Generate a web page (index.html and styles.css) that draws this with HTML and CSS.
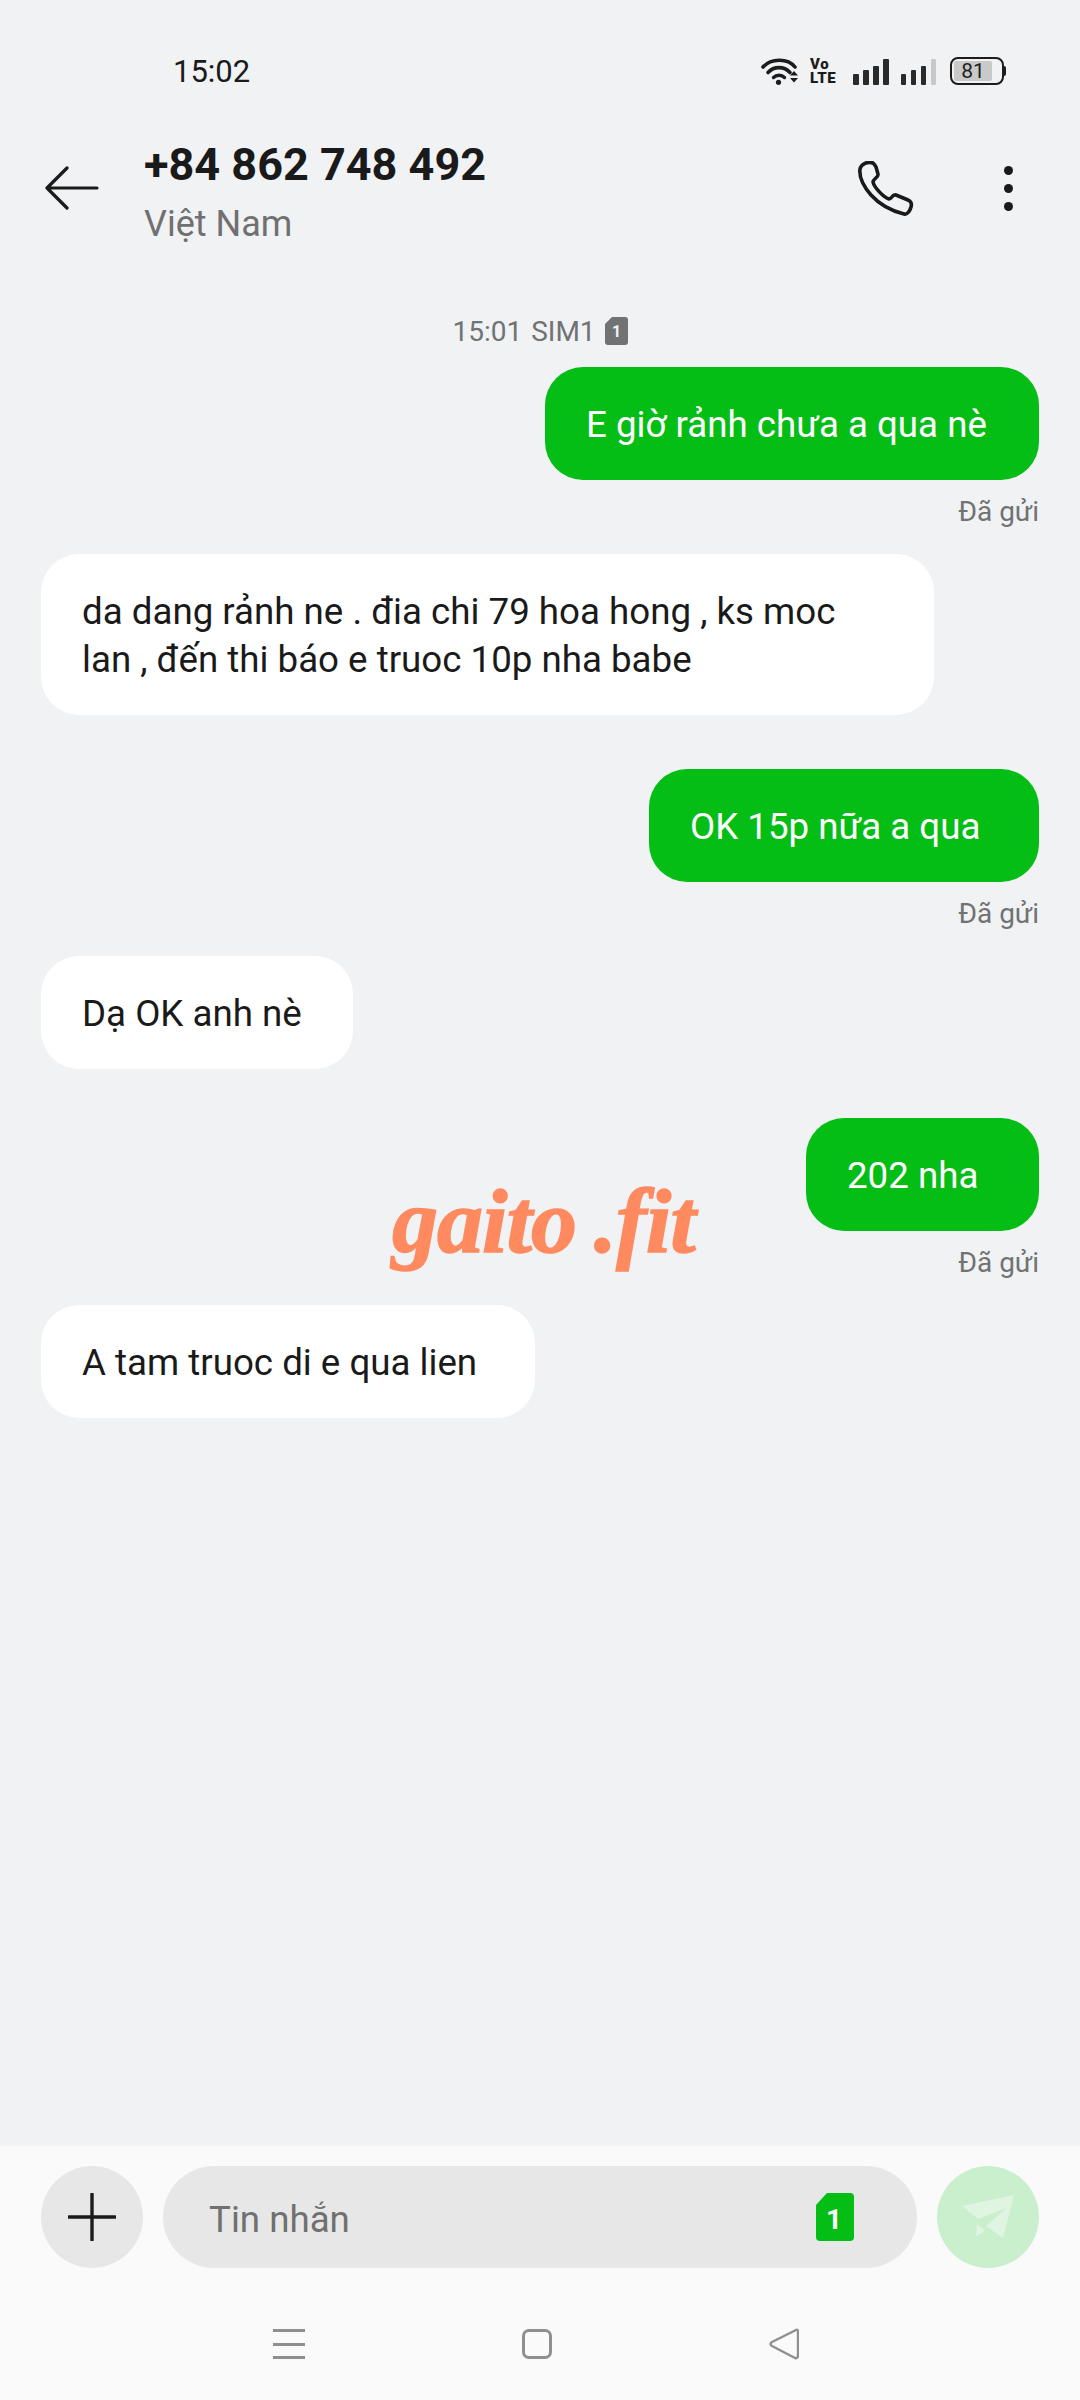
FILE: index.html
```html
<!DOCTYPE html>
<html lang="vi">
<head>
<meta charset="utf-8">
<title>+84 862 748 492</title>
<link rel="stylesheet" href="styles.css">
</head>
<body>
<div class="screen">
  <div class="status">
    <span class="clock">15:02</span>
    <div class="status-icons">
      <svg class="wifi" viewBox="0 0 38 28" width="38" height="28">
        <path d="M2 10 C10 1 27 1 34 10" fill="none" stroke="#1c1c1c" stroke-width="3.6" stroke-linecap="round"/>
        <path d="M7 15.5 C13 9 23 9 29 15.5" fill="none" stroke="#1c1c1c" stroke-width="3.6" stroke-linecap="round"/>
        <path d="M12.5 20.5 C15.5 17.5 20.5 17.5 23.5 20.5" fill="none" stroke="#1c1c1c" stroke-width="3.4" stroke-linecap="round"/>
        <circle cx="17.5" cy="25.3" r="2.6" fill="#1c1c1c"/>
        <path d="M29 18.5 L33 14 L37 18.5 Z M29 21 L37 21 L33 25.5 Z" fill="#1c1c1c"/>
      </svg>
      <div class="volte"><span>Vo</span><span>LTE</span></div>
      <div class="bars">
        <i class="bar b1"></i><i class="bar b2"></i><i class="bar b3"></i><i class="bar b4"></i>
      </div>
      <div class="bars">
        <i class="bar b1"></i><i class="bar b2"></i><i class="bar b3"></i><i class="bar b4 off"></i>
      </div>
      <div class="battery"><div class="battery-body"><span class="battery-fill">81</span></div><i class="battery-cap"></i></div>
    </div>
  </div>

  <header class="header">
    <svg class="back" viewBox="0 0 56 44" width="56" height="44">
      <path d="M52 22 H2 M22 2 L2 22 L22 42" fill="none" stroke="#1a1a1a" stroke-width="3.2" stroke-linecap="round" stroke-linejoin="round"/>
    </svg>
    <div class="title-block">
      <h1 class="title">+84 862 748 492</h1>
      <p class="subtitle">Việt Nam</p>
    </div>
    <svg class="phone" viewBox="0 0 56 56" width="56" height="56">
      <path d="M2 8 C3 3 10 0 15 2 C16 3 17 4 18 6 L20 13 C21 16 15 18 15 21 C16 26 25 36 31 38 C34 38 34 33 38 34 L50 39 C53 40 54 43 53 46 C52 50 49 54 46 53 C34 50 22 44 13 34 C6 26 1 16 2 8 Z" fill="none" stroke="#1a1a1a" stroke-width="3.6" stroke-linejoin="round"/>
    </svg>
    <div class="more"><i></i><i></i><i></i></div>
  </header>

  <main class="thread">
    <div class="stamp"><span>15:01</span><span>SIM1</span>
      <svg class="stamp-sim" viewBox="0 0 23 28" width="23" height="28">
        <path d="M7 0 H20 Q23 0 23 3 V25 Q23 28 20 28 H3 Q0 28 0 25 V7 Z" fill="#707274"/>
        <text x="11.5" y="20" text-anchor="middle" class="stamp-sim-num">1</text>
      </svg>
    </div>

    <div class="bubble sent w1">E giờ rảnh chưa a qua nè</div>
    <div class="meta">Đã gửi</div>

    <div class="bubble recv w2">da dang rảnh ne . đia chi 79 hoa hong , ks moc lan , đến thi báo e truoc 10p nha babe</div>

    <div class="bubble sent w3 after-recv">OK 15p nữa a qua</div>
    <div class="meta">Đã gửi</div>

    <div class="bubble recv w4">Dạ OK anh nè</div>

    <div class="bubble sent w5 after-recv-short">202 nha</div>
    <div class="meta">Đã gửi</div>

    <div class="bubble recv w6">A tam truoc di e qua lien</div>
  </main>

  <div class="watermark">gaito .fit</div>

  <footer class="dock">
    <div class="composer">
      <div class="round plus">
        <svg viewBox="0 0 48 48" width="48" height="48"><path d="M24 1 V47 M1 24 H47" stroke="#1a1a1a" stroke-width="3.4" stroke-linecap="round"/></svg>
      </div>
      <div class="input">
        <span class="placeholder">Tin nhắn</span>
        <svg class="input-sim" viewBox="0 0 38 48" width="38" height="48">
          <path d="M11 0 H34 Q38 0 38 4 V44 Q38 48 34 48 H4 Q0 48 0 44 V12 Z" fill="#04bd15"/>
          <text x="18" y="36" text-anchor="middle" class="input-sim-num">1</text>
        </svg>
      </div>
      <div class="round send">
        <svg viewBox="0 0 54 46" width="54" height="46">
          <path d="M1 12 L53 1 L42 44 L25 32 L45 14 L17 25 Z" fill="#e0f4e2"/>
          <path d="M16 30 L24 37 L15 42 Z" fill="#e0f4e2"/>
        </svg>
      </div>
    </div>
    <nav class="nav">
      <div class="menu"><i></i><i></i><i></i></div>
      <div class="home"></div>
      <svg class="nav-back" viewBox="0 0 30 32" width="30" height="32">
        <path d="M27 2 Q29 1 29 4 V27 Q29 31 26 30 L3 18 Q0 16 3 14 Z" fill="none" stroke="#8f8f8f" stroke-width="2.4" stroke-linejoin="round"/>
      </svg>
    </nav>
  </footer>
</div>
</body>
</html>
```
FILE: styles.css
```css
* { box-sizing: border-box; }
html, body { margin: 0; padding: 0; }
body { width: 1080px; height: 2400px; background: #f0f2f4; font-family: Roboto, "Noto Sans", sans-serif; color: #1a1a1a; overflow: hidden; }
.screen { position: relative; width: 1080px; height: 2400px; display: flex; flex-direction: column; }

.status { height: 130px; padding: 54px 74px 0 173px; display: flex; justify-content: space-between; align-items: flex-start; }
.clock { font-size: 31px; line-height: 36px; font-weight: 400; color: #1a1a1a; }
.status-icons { display: flex; align-items: flex-end; height: 30px; margin-top: 1px; }
.wifi { margin-right: 11px; }
.volte { display: flex; flex-direction: column; width: 30px; margin-right: 13px; font-size: 15px; line-height: 14px; font-weight: 900; letter-spacing: 0.6px; color: #1c1c1c; }
.bars { display: flex; align-items: flex-end; gap: 4.5px; margin-right: 12px; }
.bar { display: block; width: 5.5px; background: #2a2a2a; border-radius: 1px; }
.b1 { height: 11px; } .b2 { height: 15px; } .b3 { height: 19px; } .b4 { height: 26px; }
.bar.off { background: #c8c8c8; }
.battery { display: flex; align-items: center; margin-left: 2px; }
.battery-body { width: 54px; height: 28px; border: 2px solid #1c1c1c; border-radius: 8px; padding: 2px 10px 2px 2px; }
.battery-fill { display: block; height: 100%; background: #c9c9c9; border-radius: 2px; font-size: 21px; line-height: 20px; text-align: center; color: #222; }
.battery-cap { display: block; width: 2px; height: 10px; background: #1c1c1c; border-radius: 0 2px 2px 0; }

.header { height: 120px; padding: 0 0 0 45px; display: flex; align-items: flex-start; }
.back { margin: 36px 43px 0 0; flex: none; }
.title-block { flex: 1; padding-top: 9px; }
.title { margin: 0; font-size: 45px; line-height: 52px; font-weight: 700; color: #1a1a1a; }
.subtitle { margin: 11px 0 0; font-size: 36px; line-height: 44px; color: #707070; }
.phone { margin: 31px 90px 0 0; flex: none; }
.more { display: flex; flex-direction: column; gap: 9px; margin: 36px 67px 0 0; flex: none; }
.more i { display: block; width: 9px; height: 9px; border-radius: 50%; background: #1a1a1a; }

.thread { flex: 1; display: flex; flex-direction: column; padding: 61px 41px 0; align-items: flex-start; }
.stamp { align-self: center; display: flex; align-items: center; gap: 9px; height: 40px; font-size: 28px; color: #707274; margin-bottom: 16px; }
.stamp-sim-num { font: 700 16px Roboto, sans-serif; fill: #f0f2f4; }
.bubble { font-size: 36.7px; line-height: 48px; padding: 34px 0 31px 41px; border-radius: 38px; }
.sent { align-self: flex-end; background: #04bd15; color: #fff; }
.recv { background: #fff; color: #1a1a1a; margin-top: 24px; }
.after-recv { margin-top: 54px; }
.after-recv-short { margin-top: 49px; }
.meta { align-self: flex-end; margin-top: 13px; height: 37px; font-size: 28px; line-height: 37px; color: #707274; }
.w1 { width: 494px; }
.w2 { width: 893px; padding-right: 41px; }
.w3 { width: 390px; }
.w4 { width: 312px; }
.w5 { width: 233px; }
.w6 { width: 494px; }

.watermark { position: absolute; left: 392px; top: 1161px; font-family: "Liberation Serif", serif; font-weight: 700; font-style: italic; font-size: 92px; line-height: 120px; color: #ff8a60; -webkit-text-stroke: 1.5px #ff8a60; letter-spacing: -1px; word-spacing: -4px; white-space: nowrap; }

.dock { height: 254px; background: #fafafa; padding: 20px 41px 0 41px; }
.composer { display: flex; gap: 20px; align-items: center; height: 102px; }
.round { width: 102px; height: 102px; border-radius: 50%; display: flex; align-items: center; justify-content: center; flex: none; }
.plus { background: #e7e7e7; }
.send { background: #c9efcd; }
.input { flex: 1; height: 102px; border-radius: 51px; background: #e7e7e7; display: flex; align-items: center; justify-content: space-between; padding: 0 63px 0 46px; }
.placeholder { font-size: 36.7px; color: #707070; margin-top: 4px; }
.input-sim-num { font: 700 28px Roboto, sans-serif; fill: #fff; }
.nav { display: flex; align-items: center; margin-top: 61px; height: 30px; padding: 0 240px 0 232px; justify-content: space-between; }
.menu { display: flex; flex-direction: column; justify-content: space-between; width: 32px; height: 30px; }
.menu i { display: block; height: 3px; background: #8f8f8f; }
.home { width: 30px; height: 30px; border: 3px solid #8f8f8f; border-radius: 7px; }
```
